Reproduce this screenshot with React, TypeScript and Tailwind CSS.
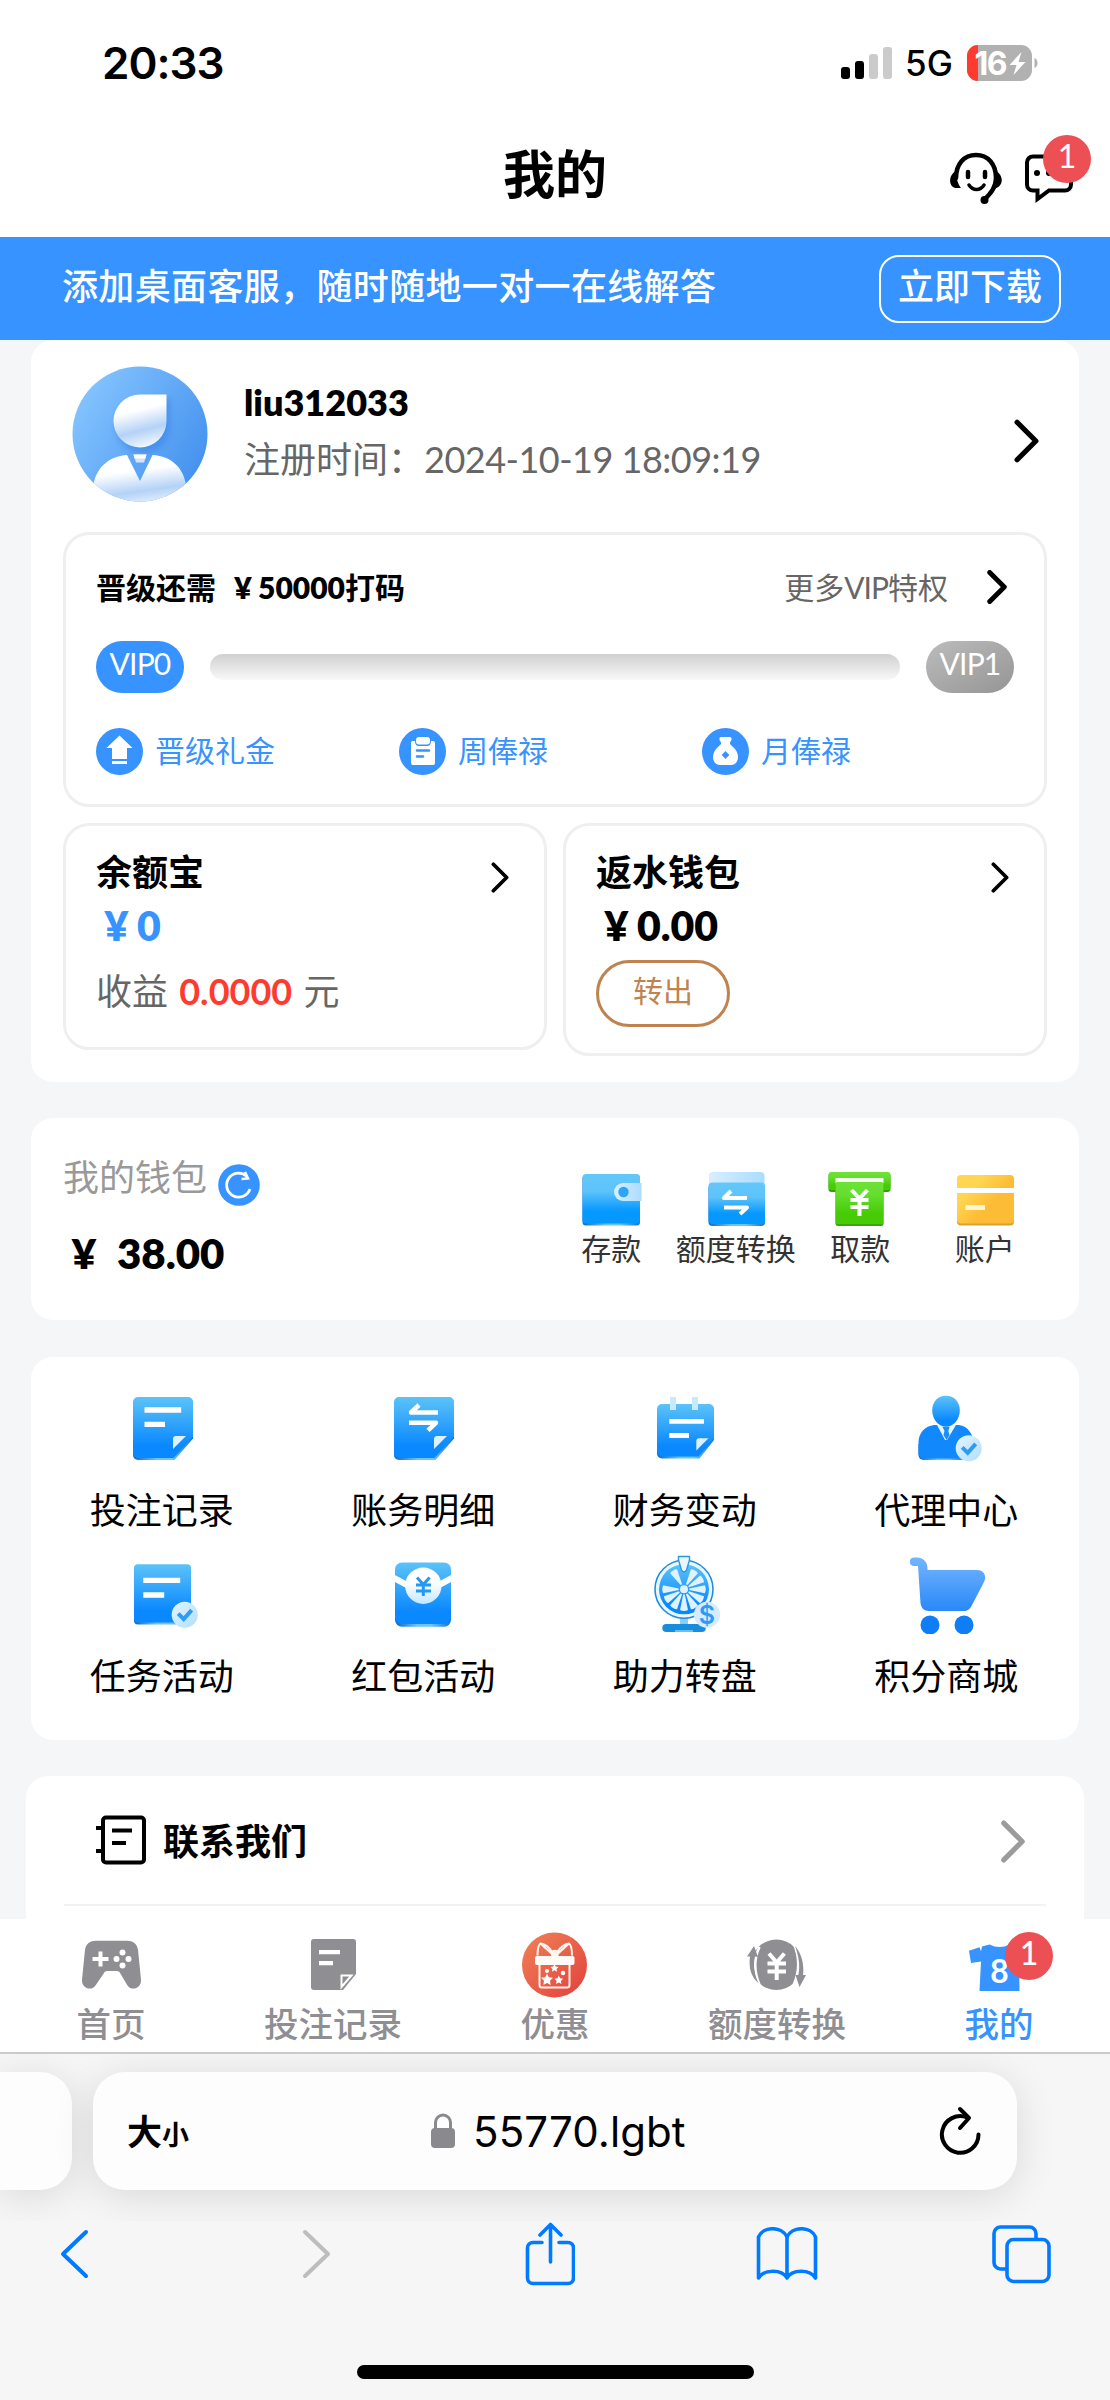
import type { ReactNode } from 'react'

// MEMBER CENTER PAGE
// Static page, shown inside the phone's browser frame

const VIP_PERKS = [
  { label: '晋级礼金', icon: <PromoteIcon /> },
  { label: '周俸禄', icon: <WeeklyIcon /> },
  { label: '月俸禄', icon: <MonthlyIcon /> },
]

const WALLET_ACTIONS = [
  { label: '存款', icon: <DepositIcon /> },
  { label: '额度转换', icon: <TransferIcon /> },
  { label: '取款', icon: <WithdrawIcon /> },
  { label: '账户', icon: <AccountIcon /> },
]

const FEATURES = [
  { label: '投注记录', icon: <BetRecordIcon /> },
  { label: '账务明细', icon: <StatementIcon /> },
  { label: '财务变动', icon: <FinanceIcon /> },
  { label: '代理中心', icon: <AgentIcon /> },
  { label: '任务活动', icon: <TaskIcon /> },
  { label: '红包活动', icon: <RedPacketIcon /> },
  { label: '助力转盘', icon: <WheelIcon /> },
  { label: '积分商城', icon: <CartIcon /> },
]

const TABS = [
  { label: '首页', icon: <GamepadIcon /> },
  { label: '投注记录', icon: <NoteIcon /> },
  { label: '优惠', icon: <GiftIcon /> },
  { label: '额度转换', icon: <ExchangeIcon /> },
  { label: '我的', icon: <ShirtIcon />, active: true, badge: 1 },
]

// gradients shared by all icons
function Gradients() {
  return (
    <svg className="absolute h-0 w-0">
      <defs>
        <linearGradient id="doc" x1="0" y1="0" x2="0" y2="1">
          <stop offset="0" stopColor="#5cc3f8" />
          <stop offset=".8" stopColor="#0a88ff" />
          <stop offset="1" stopColor="#0a88ff" />
        </linearGradient>
        <linearGradient id="wallet" x1="0" y1="0" x2="0" y2="1">
          <stop offset="0" stopColor="#63c7f9" />
          <stop offset=".35" stopColor="#5dc3fa" />
          <stop offset=".75" stopColor="#0598ff" />
          <stop offset="1" stopColor="#0598ff" />
        </linearGradient>
        <linearGradient id="pale" x1="0" y1="0" x2="1" y2="0">
          <stop offset="0" stopColor="#d8eeff" />
          <stop offset="1" stopColor="#aadcff" />
        </linearGradient>
        <linearGradient id="paleDiag" x1="0" y1="0" x2="1" y2="1">
          <stop offset="0" stopColor="#e4f5ff" />
          <stop offset="1" stopColor="#b0deff" />
        </linearGradient>
        <linearGradient id="edge" x1="0" y1="0" x2="1" y2="0">
          <stop offset="0" stopColor="#0b66c9" />
          <stop offset=".4" stopColor="#6cc4ff" />
          <stop offset=".65" stopColor="#6cc4ff" />
          <stop offset="1" stopColor="#0b74d6" />
        </linearGradient>
        <linearGradient id="green" x1="0" y1="0" x2="0" y2="1">
          <stop offset="0" stopColor="#6ce236" />
          <stop offset=".3" stopColor="#66de30" />
          <stop offset=".75" stopColor="#46cb06" />
          <stop offset="1" stopColor="#46cb06" />
        </linearGradient>
        <linearGradient id="gold" x1="0" y1="0" x2="1" y2=".8">
          <stop offset=".3" stopColor="#ffd552" />
          <stop offset=".65" stopColor="#fdbc35" />
        </linearGradient>
        <linearGradient id="coin" x1="0" y1="0" x2="0" y2="1">
          <stop offset=".4" stopColor="#ffffff" />
          <stop offset="1" stopColor="#c4e8ff" />
        </linearGradient>
        <linearGradient id="cart" x1="0" y1="0" x2="0" y2="1">
          <stop offset="0" stopColor="#73b5ff" />
          <stop offset="1" stopColor="#2a88f8" />
        </linearGradient>
        <linearGradient id="gift" x1="0" y1="0" x2="1" y2="1">
          <stop offset="0" stopColor="#f08258" />
          <stop offset="1" stopColor="#e2403c" />
        </linearGradient>
        <linearGradient id="avatarBg" x1="0" y1="0.2" x2="1" y2=".8">
          <stop offset="0" stopColor="#87c6ff" />
          <stop offset="1" stopColor="#418fee" />
        </linearGradient>
        <linearGradient id="avatarFg" x1=".35" y1="0" x2=".6" y2="1">
          <stop offset=".3" stopColor="#ffffff" />
          <stop offset=".68" stopColor="#b4d2f7" />
          <stop offset="1" stopColor="#f4f9ff" />
        </linearGradient>
      </defs>
    </svg>
  )
}

function Chevron({ className, width = 5 }: { className: string; width?: number }) {
  return (
    <svg className={className} viewBox="0 0 24 42" fill="none" stroke="currentColor" strokeWidth={width} strokeLinecap="round" strokeLinejoin="round">
      <path d="M3 3 21 21 3 39" />
    </svg>
  )
}

// full-width box around the yen sign
function Yen() {
  return <span className="inline-block w-[1em] text-center">¥</span>
}

function HeadsetIcon() {
  return (
    <svg className="h-[54px] w-[54px]" viewBox="0 0 54 54" fill="none" stroke="#000" strokeLinecap="round">
      <path d="M7 27C7 13 15 4 27 4s20 9 20 23c0 9-5 15-11 21" strokeWidth="4.5" />
      <path d="M7 20C-1 24-1 37 8 37h4C9 33 7 27 7 20ZM47 20c8 4 8 16-2 18 2-4 2-10 2-18Z" fill="#000" stroke="none" />
      <path d="M19 21v5M36 21v5" strokeWidth="4.5" />
      <path d="M20 34c4 6 11 6 15 0" strokeWidth="3.5" />
      <circle cx="35.500" cy="49" r="4" fill="#000" stroke="none" />
    </svg>
  )
}

function ChatIcon() {
  return (
    <svg className="h-[50px] w-[50px]" viewBox="0 0 50 50" fill="none" stroke="#000" strokeWidth="4">
      <path d="M9 3.500h32a6 6 0 0 1 6 6v22a6 6 0 0 1-6 6H25L13.500 46v-8.500H9a6 6 0 0 1-6-6v-22a6 6 0 0 1 6-6Z" />
      <g fill="#000" stroke="none">
        <circle cx="13" cy="20" r="3" />
        <circle cx="25" cy="20" r="3" />
      </g>
    </svg>
  )
}

function Avatar() {
  return (
    <svg className="h-[136px] w-[136px]" viewBox="0 0 136 136">
      <clipPath id="avatarClip"><circle cx="68" cy="68" r="67.500" /></clipPath>
      <g clipPath="url(#avatarClip)">
        <rect width="136" height="136" fill="url(#avatarBg)" />
        <path d="M68 29h27v27a27 27 0 1 1-27-27Z" fill="#2f78e0" opacity=".45" transform="translate(3 4)" className="blur-[3px]" />
        <path d="M68 28.500h26.500v27A26.500 26.500 0 1 1 68 28.500Z" fill="url(#avatarFg)" />
        <path d="M21 122c2-20 16-32 34-33l13 26 12.500-26c19 1 32 13 34 33v20H21Z" fill="url(#avatarFg)" />
        <path d="M61.500 88.500h13l-2.500 8h-8Z" fill="#d3e5fb" />
        <path d="M61.500 88.500h13l-1 4h-11Z" fill="#fff" />
      </g>
    </svg>
  )
}

function PromoteIcon() {
  return (
    <svg className="h-[47px] w-[47px]" viewBox="0 0 47 47">
      <circle cx="23.500" cy="23.500" r="23.500" fill="#3693ff" />
      <path d="M23.500 7.500 36.500 20H31v11H16V20h-5.500ZM16 33h15v3H16Z" fill="#fff" />
    </svg>
  )
}

function WeeklyIcon() {
  return (
    <svg className="h-[47px] w-[47px]" viewBox="0 0 47 47">
      <circle cx="23.500" cy="23.500" r="23.500" fill="#3693ff" />
      <path d="M13 13h3c0 4 2 5 4 5h8c2 0 4-1 4-5h2a2 2 0 0 1 2 2v20a2 2 0 0 1-2 2H14a2 2 0 0 1-2-2V14Z" fill="#fff" />
      <rect x="17" y="9" width="14" height="7.500" rx="3" fill="#fff" />
      <path d="M18 22.500h12M18 28.500h6" stroke="#3693ff" strokeWidth="2.600" strokeLinecap="round" />
    </svg>
  )
}

function MonthlyIcon() {
  return (
    <svg className="h-[47px] w-[47px]" viewBox="0 0 47 47">
      <circle cx="23.500" cy="23.500" r="23.500" fill="#3693ff" />
      <path d="M19 9h9c2 0 2 3 .5 4.500-1.200 1.500-.5 3 1.500 4.500 4 3 6 7 6 11 0 5-3 8-7 8H18c-4 0-7-3-7-8 0-4 2-8 6-11 2-1.500 2.700-3 1.500-4.500C17 12 17 9 19 9Z" fill="#fff" />
      <path d="m23.500 23 3.800 4-3.800 4-3.800-4Z" fill="#3693ff" />
    </svg>
  )
}

function RefreshBadge() {
  return (
    <svg className="h-[42px] w-[42px]" viewBox="0 0 42 42" fill="none">
      <circle cx="21" cy="21" r="20.800" fill="#3693ff" />
      <path d="M29 12.500A12 12 0 1 0 32 25" stroke="#fff" strokeWidth="2.800" />
      <path d="m27 8 3 6.500-6.500.5" stroke="#fff" strokeWidth="2.500" />
    </svg>
  )
}

function DepositIcon() {
  return (
    <svg className="h-14 w-16" viewBox="0 0 64 56">
      <rect x="3.500" y="5" width="57.500" height="50.500" rx="3.500" fill="url(#edge)" />
      <rect x="3.500" y="4" width="57.500" height="49.500" rx="3.500" fill="url(#wallet)" />
      <path d="M62.500 13v18H44a9 9 0 0 1 0-18Z" fill="url(#pale)" />
      <circle cx="44.500" cy="22" r="5.200" fill="#2ca4f8" />
    </svg>
  )
}

function TransferIcon() {
  return (
    <svg className="h-14 w-16" viewBox="0 0 64 56">
      <rect x="5" y="2" width="55.500" height="30" rx="4" fill="url(#pale)" />
      <rect x="4.500" y="14" width="56.500" height="42" rx="4" fill="url(#edge)" />
      <rect x="4.500" y="12.500" width="56.500" height="41.500" rx="4" fill="url(#wallet)" />
      <path d="M43 28H20l7-7M20 37.500h23l-7 6.500" fill="none" stroke="#fff" strokeWidth="4" strokeLinejoin="round" />
    </svg>
  )
}

function WithdrawIcon() {
  return (
    <svg className="h-14 w-16" viewBox="0 0 64 56">
      <rect x=".5" y="3" width="62" height="19" rx="3" fill="#32a202" />
      <rect x=".5" y="2" width="62" height="18" rx="3" fill="url(#green)" />
      <rect x="7.500" y="8" width="48" height="5" fill="#f2ffec" />
      <rect x="7.500" y="14" width="48" height="42" rx="2.500" fill="#35a904" />
      <rect x="7.500" y="12" width="48" height="42" rx="2" fill="url(#green)" />
      <path d="m23.500 20 8 8.500 8-8.500M22.500 30h18M22.500 37h18M31.500 28v18" fill="none" stroke="#fff" strokeWidth="4" />
    </svg>
  )
}

function AccountIcon() {
  return (
    <svg className="h-14 w-16" viewBox="0 0 64 56">
      <rect x="4" y="6" width="57" height="49.500" rx="4" fill="#d9a032" />
      <rect x="4" y="5" width="57" height="48.500" rx="4" fill="url(#gold)" />
      <path d="M4 18h57v5H4Z" fill="#fff" />
      <path d="M12.500 35H32v5H12.500Z" fill="#fff5d0" />
    </svg>
  )
}

function CheckBadge({ x, y }: { x: number; y: number }) {
  return (
    <g>
      <circle cx={x} cy={y} r="13" fill="url(#paleDiag)" />
      <path d={`M${x - 6.500} ${y - 1}l5.500 5.500 8-9`} fill="none" stroke="#2c9cf5" strokeWidth="4" />
    </g>
  )
}

function BetRecordIcon() {
  return (
    <svg className="h-20 w-20" viewBox="0 0 80 80">
      <path d="M16 10h50a5 5 0 0 1 5 5v35.500L52.500 72H16a5 5 0 0 1-5-5Z" fill="url(#edge)" />
      <path d="M16 9h50a5 5 0 0 1 5 5v34.500L51.500 70H16a5 5 0 0 1-5-5V14a5 5 0 0 1 5-5Z" fill="url(#doc)" />
      <path d="M51 61V51a3 3 0 0 1 3-3h10Z" fill="#dcf1ff" />
      <path d="M22.500 19.300h36.700v5.400H22.500ZM22.500 33.700H43V39H22.500Z" fill="#fff" />
    </svg>
  )
}

function StatementIcon() {
  return (
    <svg className="h-20 w-20" viewBox="0 0 80 80">
      <path d="M16 10h50a5 5 0 0 1 5 5v35.500L52.500 72H16a5 5 0 0 1-5-5Z" fill="url(#edge)" />
      <path d="M16 9h50a5 5 0 0 1 5 5v34.500L51.500 70H16a5 5 0 0 1-5-5V14a5 5 0 0 1 5-5Z" fill="url(#doc)" />
      <path d="M51 61V51a3 3 0 0 1 3-3h10Z" fill="#dcf1ff" />
      <path d="M55 24.500H28l8-7.500M26 34.800h27l-8 7.500" fill="none" stroke="#fff" strokeWidth="4.500" strokeLinejoin="round" />
    </svg>
  )
}

function FinanceIcon() {
  return (
    <svg className="h-20 w-20" viewBox="0 0 80 80">
      <path d="M17 17h47a5 5 0 0 1 5 5v30L54.500 70.500H17a5 5 0 0 1-5-5Z" fill="url(#edge)" />
      <path d="M17 16h47a5 5 0 0 1 5 5v29.500L53.500 68.500H17a5 5 0 0 1-5-5V21a5 5 0 0 1 5-5Z" fill="url(#doc)" />
      <path d="M25 9h6v13h-6ZM47 9h6v13h-6Z" fill="#c9e9fd" />
      <path d="M51.300 62.500V53a2.700 2.700 0 0 1 2.700-2.700h9.500Z" fill="#dcf1ff" />
      <path d="M24.300 31H59v4.700H24.300ZM24.300 45H44v5H24.300Z" fill="#fff" />
    </svg>
  )
}

function AgentIcon() {
  return (
    <svg className="h-20 w-20" viewBox="0 0 80 80">
      <path d="M12.500 56v11a5 5 0 0 0 5 5H60V56Z" fill="url(#edge)" />
      <path d="M28 37h25c9 1 14.500 10 14.500 18v15.500H17.500a5 5 0 0 1-5-5V54C12.500 45 19 38 28 37Z" fill="#1188fc" />
      <path d="M31 37h19L41 52h-2Z" fill="#e6f5ff" />
      <path d="M36.500 39h7l-1.200 4 1.200 4-3 5-3-5 1-4Z" fill="#1a8ff8" />
      <path d="M40 7.700c8 0 13.800 6 13.800 14.500S48 38.700 40 38.700s-13.800-8-13.800-16.500S32 7.700 40 7.700Z" fill="url(#doc)" />
      <CheckBadge x={62.700} y={60.300} />
    </svg>
  )
}

function TaskIcon() {
  return (
    <svg className="h-20 w-20" viewBox="0 0 80 80">
      <rect x="12" y="12" width="57" height="58.500" rx="4" fill="url(#edge)" />
      <rect x="12" y="10.300" width="57" height="58.200" rx="4" fill="url(#doc)" />
      <path d="M21.300 23.700h36.900V29H21.300ZM21.300 38.300h20.900v5.400H21.300Z" fill="#fff" />
      <CheckBadge x={62.700} y={60.700} />
    </svg>
  )
}

function RedPacketIcon() {
  return (
    <svg className="h-20 w-20" viewBox="0 0 80 80">
      <rect x="12" y="40" width="56" height="32.700" rx="7" fill="url(#edge)" />
      <path d="M12 28V15.500a7 7 0 0 1 7-7h42a7 7 0 0 1 7 7V28v35a7 7 0 0 1-7 7H19a7 7 0 0 1-7-7Z" fill="url(#doc)" />
      <path d="M11 20.500 40 36l29-15.500v7L40 43 11 27.500Z" fill="#fff" />
      <circle cx="40.300" cy="31.700" r="18.200" fill="url(#coin)" />
      <path d="m34 23.500 6.300 7 6.300-7M33 31h15M33 37h15M40.300 30v12" fill="none" stroke="#2597f5" strokeWidth="3" />
    </svg>
  )
}

function WheelIcon() {
  return (
    <svg className="h-20 w-20" viewBox="0 0 80 80">
      <path d="M35 62h8v10h-8Z" fill="#8fcdf6" />
      <rect x="17.300" y="70" width="43.500" height="8" rx="4" fill="#168edb" />
      <path d="M30 77h18" stroke="#7fd0ff" strokeWidth="1.500" />
      <circle cx="39" cy="35.300" r="29" fill="#e8f6ff" stroke="#1d8de0" strokeWidth="1.600" />
      <circle cx="39" cy="35.300" r="25" fill="url(#doc)" />
      {[30, 60, 90, 120, 150, 180, 210, 240, 270, 330].map(angle => (
        <path key={angle} d="M38.200 30 35 14.500q4-2 8 0L39.800 30Z" fill="#dff3ff" transform={`rotate(${angle} 39 35.300)`} />
      ))}
      <circle cx="39" cy="35.300" r="4" fill="#dff3ff" />
      <path d="M33.500 2.500h11V6l-3 10c-1 2.500-4 2.500-5 0l-3-10Z" fill="#e8f6ff" stroke="#2b97e8" strokeWidth="1.400" />
      <circle cx="62" cy="60.700" r="13" fill="#d3edff" />
      <text x="62" y="70" textAnchor="middle" fontFamily="Inter" fontSize="25" fontWeight="600" fill="#2c9cf5">$</text>
    </svg>
  )
}

function CartIcon() {
  return (
    <svg className="h-20 w-20" viewBox="0 0 80 80">
      <path d="M7.500 3.500H11c6 0 10.500 4 10.500 11V16H71c7 0 10 6 7 12L66 51c-2 4-4 6-9 6H23c-5 0-8-3-8.500-8L12 12H7.500a4.300 4.300 0 0 1 0-8.500Z" fill="url(#cart)" />
      <circle cx="24" cy="71" r="9.500" fill="#0f7df3" />
      <circle cx="58" cy="71" r="9.500" fill="#0f7df3" />
    </svg>
  )
}

function ContactIcon() {
  return (
    <svg className="h-[50px] w-[50px]" viewBox="0 0 50 50" fill="none" stroke="#000" strokeWidth="4">
      <rect x="7" y="2.500" width="41" height="45" rx="3" />
      <path d="M0 13h7M0 36h7M16 15.500h20M16 28h14" />
    </svg>
  )
}

function GamepadIcon() {
  return (
    <svg className="h-[70px] w-[70px]" viewBox="0 0 70 70">
      <path d="M20 10.700h31c6 0 10 3 11 9l3 30c.5 9-10 12-14 5l-6.500-11c-1-2-2-2.700-4-2.700h-9c-2 0-3 .7-4 2.700L20 54.700c-4 7-14.500 4-14-5l3-30c1-6 5-9 11-9Z" fill="#8e8e93" />
      <path d="M24.500 21.500v15M16.500 29h16" stroke="#fff" strokeWidth="4" />
      <g fill="#fff">
        <circle cx="46.500" cy="22.500" r="3" />
        <circle cx="46.500" cy="35.500" r="3" />
        <circle cx="40.500" cy="29" r="3" />
        <circle cx="52.500" cy="29" r="3" />
      </g>
    </svg>
  )
}

function NoteIcon() {
  return (
    <svg className="h-[70px] w-[70px]" viewBox="0 0 70 70">
      <path d="M16 9h39a3 3 0 0 1 3 3v32L45 60H16a3 3 0 0 1-3-3V12a3 3 0 0 1 3-3Z" fill="#8e8e93" />
      <path d="M43.500 57V45.500h10Z" fill="#8e8e93" stroke="#fff" strokeWidth="2" />
      <path d="M21 22.200h21M21 33.200h14" stroke="#fff" strokeWidth="4.300" />
    </svg>
  )
}

function GiftIcon() {
  return (
    <svg className="h-[70px] w-[70px]" viewBox="0 0 70 70">
      <circle cx="34.500" cy="35" r="32.500" fill="url(#gift)" />
      <g fill="none" stroke="#fff5ee" strokeWidth="2">
        <path d="M32 24 20.500 13.500c-3 2-3 8-3 12M37.500 24 49 13.500c3 2 3 8 3 12M20.500 13.500c4 0 9 4 12 9M49 13.500c-4 0-9 4-12 9" />
        <path d="M19.500 34v21q0 2.500 2.500 2.500h25q2.500 0 2.500-2.500V34" />
      </g>
      <circle cx="34.800" cy="23.700" r="4" fill="#fff5ee" />
      <rect x="15" y="26" width="39.500" height="9" rx="2" fill="#fffaf6" />
      <g fill="#fff">
        <path d="m34.500 34 1.200 2.600 2.800.3-2 2 .5 2.800-2.500-1.400-2.500 1.400.5-2.800-2-2 2.800-.3Z" />
        <path d="m27 43.500 1.800 3.800 4.200.5-3 3 .7 4.200-3.700-2-3.700 2 .7-4.200-3-3 4.200-.5Z" />
        <path d="m38.800 45.500 1.300 2.800 3 .4-2.200 2.200.5 3-2.600-1.500-2.700 1.500.5-3-2.100-2.200 3-.4Z" />
        <circle cx="27" cy="41" r="2" />
        <circle cx="43" cy="43" r="2.200" />
      </g>
    </svg>
  )
}

function ExchangeIcon() {
  return (
    <svg className="h-[70px] w-[70px]" viewBox="0 0 70 70">
      <circle cx="34.400" cy="34.800" r="25.200" fill="#8e8e93" />
      <path d="M17.500 17Q9 34 17.500 55M52 14q8.500 20 0 40" fill="none" stroke="#fff" strokeWidth="2.600" />
      <path d="M12 16 5 26.500h3C6.500 38 9 47 16.500 53 12 44 11 36 12.500 26.500l3.500.5ZM57.500 57l6.500-12h-3c1.500-12-2-22-8-29 4 10 5 20 4 29h-3.500Z" fill="#8e8e93" />
      <path d="m27 23.500 7.700 9 7.700-9M25.500 33.500H44M25.500 41.500H44M34.700 32v18" fill="none" stroke="#fff" strokeWidth="4" />
    </svg>
  )
}

function ShirtIcon() {
  return (
    <svg className="h-[70px] w-[70px]" viewBox="0 0 70 70">
      <path d="m5 20.700 10.500-3.500 1.500 4 1-4.700 7.500-2q10 5 20 0l7 2L66 20.700 64 33l-9-2 .5 30h-40L17 31.500 7 33Z" fill="#3693ff" />
      <text x="35.500" y="52.500" textAnchor="middle" fontFamily="Roboto" fontSize="34" fontWeight="500" fill="#fff">8</text>
    </svg>
  )
}

function Badge({ count, className }: { count: number; className: string }) {
  return (
    <span className={`absolute flex h-12 w-12 items-center justify-center rounded-full bg-[#ec5055] pb-1.5 font-['Lato'] text-[32px] leading-none text-white ${className}`}>
      {count}
    </span>
  )
}

function StatusBar() {
  return (
    <div className="flex h-[126px] items-center justify-between pr-[70px] pl-[102px] font-['Inter']">
      <span className="text-[44px] leading-none font-semibold tracking-[-1px]">20:33</span>
      <div className="flex items-center">
        <svg className="h-[34px] w-[52px]" viewBox="0 0 52 34">
          <rect x="1" y="21" width="9" height="12" rx="3" />
          <rect x="15" y="15" width="9" height="18" rx="3" />
          <rect x="29" y="8" width="9" height="25" rx="3" fill="#cbcbcb" />
          <rect x="43" y="1" width="9" height="32" rx="3" fill="#cbcbcb" />
        </svg>
        <span className="ml-[13px] w-[62px] text-[35px] leading-none font-medium">5G</span>
        <svg className="h-9 w-[73px]" viewBox="0 0 73 36">
          <clipPath id="batteryClip"><rect y="0" width="65" height="36" rx="11" /></clipPath>
          <g clipPath="url(#batteryClip)">
            <rect width="65" height="36" fill="#b1b1b1" />
            <rect width="11" height="36" fill="#ff3b30" />
          </g>
          <path d="M67.500 13c4 1.500 4 8.500 0 10Z" fill="#b1b1b1" />
          <text x="7.500" y="29.500" fontFamily="Inter" fontSize="32" fontWeight="700" letterSpacing="-1.500" fill="#fff">16</text>
          <path d="M54.500 7 42.500 20h7l-3 10L58.500 17h-7Z" fill="#fff" />
        </svg>
      </div>
    </div>
  )
}

function TitleBar() {
  return (
    <div className="flex h-[111px] items-start pr-9">
      <div className="w-[300px]" />
      <h1 className="mt-4 flex-1 text-center text-[52px] leading-[64px] font-bold">我的</h1>
      <div className="relative flex w-[264px] items-center justify-end gap-[21px] pt-[25px]">
        <HeadsetIcon />
        <ChatIcon />
        <Badge count={1} className="top-[9px] -right-[17px]" />
      </div>
    </div>
  )
}

function SmallCard({ title, amount, amountClass, className, children }: {
  title: string
  amount: string
  amountClass: string
  className: string
  children: ReactNode
}) {
  return (
    <div className={`w-[485px] rounded-[26px] border-[3px] border-[#efefef] px-[30px] pt-6 ${className}`}>
      <div className="flex items-start justify-between">
        <h2 className="text-[36px] leading-[44px] font-bold">{title}</h2>
        <Chevron className="mt-3 mr-[5px] h-[31px] w-[18px]" />
      </div>
      <p className={`mt-2 text-[41px] leading-[48px] font-extrabold ${amountClass}`}><Yen />{amount}</p>
      {children}
    </div>
  )
}

function ProfileCard() {
  return (
    <section className="mx-[31px] h-[742px] rounded-[22px] bg-white px-8 pt-[26px]">
      <div className="flex h-[166px] items-start pl-[9px]">
        <Avatar />
        <div className="ml-9 flex-1">
          <p className="mt-3 text-[36px] leading-[48px] font-extrabold">liu312033</p>
          <p className="mt-[9px] text-[36px] leading-[48px] text-[#666]">
            注册时间：<span className="tracking-[-0.500px]">2024-10-19 18:09:19</span>
          </p>
        </div>
        <Chevron className="mt-[53px] mr-[8px] h-[44px] w-[25px]" />
      </div>

      <div className="h-[275px] rounded-[26px] border-[3px] border-[#efefef] px-[30px] pt-[31px]">
        <div className="flex h-[42px] items-center">
          <p className="flex-1 text-[30px] leading-none font-bold">
            晋级还需<span className="ml-3 font-extrabold"><Yen />50000</span>打码
          </p>
          <span className="text-[30px] leading-none text-[#666]">更多<span className="tracking-[-1px]">VIP</span>特权</span>
          <Chevron className="mr-[7px] ml-[39px] h-[34px] w-[20px]" width={6} />
        </div>
        <div className="mt-[33px] flex h-[52px] items-center">
          <span className="h-[52px] w-[88px] rounded-[26px] bg-[#3693ff] text-center text-[30px] leading-[45px] tracking-[-0.800px] text-white">VIP0</span>
          <div className="mx-[26px] h-[26px] flex-1 rounded-[13px] bg-linear-to-b from-[#d0d0d0] to-[#f9f9f9]" />
          <span className="h-[52px] w-[88px] rounded-[26px] bg-linear-to-br from-[#bcbcbc] to-[#959595] text-center text-[30px] leading-[45px] tracking-[-0.800px] text-white">VIP1</span>
        </div>
        <div className="mt-[35px] flex">
          {VIP_PERKS.map(perk => (
            <div key={perk.label} className="flex w-[303px] items-center gap-3 text-[30px] leading-none text-[#3693ff]">
              {perk.icon}
              <span className="mb-[3px]">{perk.label}</span>
            </div>
          ))}
        </div>
      </div>

      <div className="mt-4 flex items-start gap-4">
        <SmallCard title="余额宝" amount="0" amountClass="text-[#3693ff]" className="h-[227px]">
          <p className="mt-[17px] text-[36px] leading-[48px] text-[#666] [word-spacing:2px]">
            收益 <b className="text-[#ff3b30]">0.0000</b> 元
          </p>
        </SmallCard>
        <SmallCard title="返水钱包" amount="0.00" amountClass="text-black" className="h-[233px]">
          <button className="mt-[10px] h-[67px] w-[134px] rounded-full border-[3px] border-[#bf834f] pb-2 text-[30px] leading-none text-[#bf834f]">转出</button>
        </SmallCard>
      </div>
    </section>
  )
}

function WalletCard() {
  return (
    <section className="mx-[31px] mt-9 flex h-[202px] rounded-[22px] bg-white pl-8">
      <div className="flex-1 pt-[35px]">
        <div className="flex items-center gap-[11px] text-[36px] leading-[48px] text-[#999]">
          <span>我的钱包</span>
          <span className="mt-2 -mb-2"><RefreshBadge /></span>
        </div>
        <p className="mt-[28px] text-[42px] leading-[48px] font-extrabold"><Yen /><span className="ml-3">38.00</span></p>
      </div>
      <div className="flex pt-[52px] pr-8">
        {WALLET_ACTIONS.map(action => (
          <div key={action.label} className="flex w-[124.500px] flex-col items-center">
            {action.icon}
            <span className="mt-[7px] text-[30px] leading-[30px] whitespace-nowrap text-[#333]">{action.label}</span>
          </div>
        ))}
      </div>
    </section>
  )
}

function FeatureGrid() {
  return (
    <section className="mx-[31px] mt-[37px] grid h-[383px] auto-rows-[166px] grid-cols-4 rounded-[22px] bg-white pt-[31px] pr-0.5">
      {FEATURES.map(feature => (
        <div key={feature.label} className="flex flex-col items-center">
          {feature.icon}
          <span className="mt-6 text-[36px] leading-9">{feature.label}</span>
        </div>
      ))}
    </section>
  )
}

function TabBar() {
  return (
    <nav className="grid h-[133px] grid-cols-5 bg-white pt-[11px]">
      {TABS.map(tab => (
        <div key={tab.label} className={`relative flex flex-col items-center font-medium ${tab.active ? 'text-[#3693ff]' : 'text-[#8e8e93]'}`}>
          {tab.icon}
          <span className="mt-[7px] text-[34.500px] leading-[34px]">{tab.label}</span>
          {tab.badge && <Badge count={tab.badge} className="top-0.5 left-[117px]" />}
        </div>
      ))}
    </nav>
  )
}

function BrowserBar() {
  return (
    <footer className="flex h-[348px] flex-col items-center border-t-2 border-[#cacaca] bg-[#f6f6f6]">
      <div className="flex w-full gap-[21px] overflow-hidden pt-[18px] pb-[31px]">
        <div className="h-[118px] w-[72px] rounded-r-[32px] bg-[#fdfdfd] shadow-[0_6px_40px_rgba(0,0,0,0.12)]" />
        <div className="flex h-[118px] w-[924px] items-center rounded-[32px] bg-[#fdfdfd] pr-[36px] pl-[34px] shadow-[0_6px_40px_rgba(0,0,0,0.12)]">
          <div className="flex w-[304px] items-baseline font-bold">
            <span className="text-[35px] leading-none">大</span>
            <span className="text-[27px] leading-none">小</span>
          </div>
          <svg className="h-[36px] w-[24px]" viewBox="0 0 24 36">
            <rect y="15" width="24" height="20" rx="4" fill="#8a8a8e" />
            <path d="M4.500 16V9.500a7.500 7.500 0 0 1 15 0V16" fill="none" stroke="#8a8a8e" strokeWidth="3" />
          </svg>
          <span className="mt-0.5 ml-[18px] flex-1 font-['Inter'] text-[42px] leading-none tracking-[0.100px]">55770.lgbt</span>
          <svg className="h-[50px] w-[42px]" viewBox="0 0 42 50" fill="none" stroke="#000" strokeWidth="4" strokeLinecap="round" strokeLinejoin="round">
            <path d="M28 11.500A18.300 18.300 0 1 0 39.500 28.500" />
            <path d="M21 3 30 12 21 22" />
          </svg>
        </div>
      </div>

      <div className="flex h-[66px] w-full items-center pl-[59px] text-[#007aff]">
        <svg className="h-[50px] w-[30px]" viewBox="0 0 30 50" fill="none" stroke="currentColor" strokeWidth="4" strokeLinecap="round" strokeLinejoin="round">
          <path d="M27 3 4 25l23 22" />
        </svg>
        <svg className="ml-[213px] h-[50px] w-[30px] text-[#bdbdbd]" viewBox="0 0 30 50" fill="none" stroke="currentColor" strokeWidth="4" strokeLinecap="round" strokeLinejoin="round">
          <path d="m3 3 23 22L3 47" />
        </svg>
        <svg className="ml-[193px] h-[64px] w-[50px]" viewBox="0 0 50 64" fill="none" stroke="currentColor" strokeWidth="3.600" strokeLinecap="round" strokeLinejoin="round">
          <path d="M17 20.500H8a5.500 5.500 0 0 0-5.500 5.500v30A5.500 5.500 0 0 0 8 61.500h35a5.500 5.500 0 0 0 5.500-5.500V26a5.500 5.500 0 0 0-5.500-5.500h-9M25.500 40V3M15 13 25.500 2.500 36 13" />
        </svg>
        <svg className="ml-[180px] h-[54px] w-[64px]" viewBox="0 0 64 54" fill="none" stroke="currentColor" strokeWidth="3.600" strokeLinejoin="round">
          <path d="M32 10C27-1 8-1 3.500 10v41C9 42 27 42 32 51c5-9 23-9 28.500 0V10C56-1 37-1 32 10v41" />
        </svg>
        <svg className="ml-[172px] h-[60px] w-[60px]" viewBox="0 0 60 60" fill="none" stroke="currentColor" strokeWidth="3.600">
          <rect x="16" y="15.500" width="42" height="42" rx="6.500" />
          <path d="M15 45H9.500A6.500 6.500 0 0 1 3 38.500v-29A6.500 6.500 0 0 1 9.500 3h29a6.500 6.500 0 0 1 6.500 6.500V15" />
        </svg>
      </div>

      <div className="mt-[78px] h-[14px] w-[397px] rounded-full bg-black" />
    </footer>
  )
}

export default function App() {
  return (
    <div className="h-[2400px] w-[1110px] overflow-hidden bg-white font-['Lato','Noto_Sans_CJK_SC',sans-serif] text-black">
      <Gradients />
      <header>
        <StatusBar />
        <TitleBar />
      </header>

      <div className="flex h-[103px] items-center justify-between bg-[#3693ff] pr-[49px] pl-[62px] text-[36px] leading-none font-medium text-white">
        <span className="mb-1.5 tracking-[0.350px]">添加桌面客服，随时随地一对一在线解答</span>
        <button className="h-[68px] w-[182px] rounded-[20px] border-[2.500px] border-white pb-1.5 font-medium">立即下载</button>
      </div>

      <main className="h-[1579px] overflow-hidden bg-[#f4f6f8]">
        <ProfileCard />
        <WalletCard />
        <FeatureGrid />
        <section className="mx-[26px] mt-9 h-[200px] rounded-t-[22px] bg-white px-[38px]">
          <div className="flex h-[130px] items-center border-b-2 border-[#f2f3f5] pr-[20px] pl-8">
            <ContactIcon />
            <span className="mt-0.5 ml-[17px] flex-1 text-[36px] leading-none font-bold">联系我们</span>
            <Chevron className="mt-0.5 h-[43px] w-[26px] text-[#9b9b9b]" />
          </div>
        </section>
      </main>

      <TabBar />
      <BrowserBar />
    </div>
  )
}
